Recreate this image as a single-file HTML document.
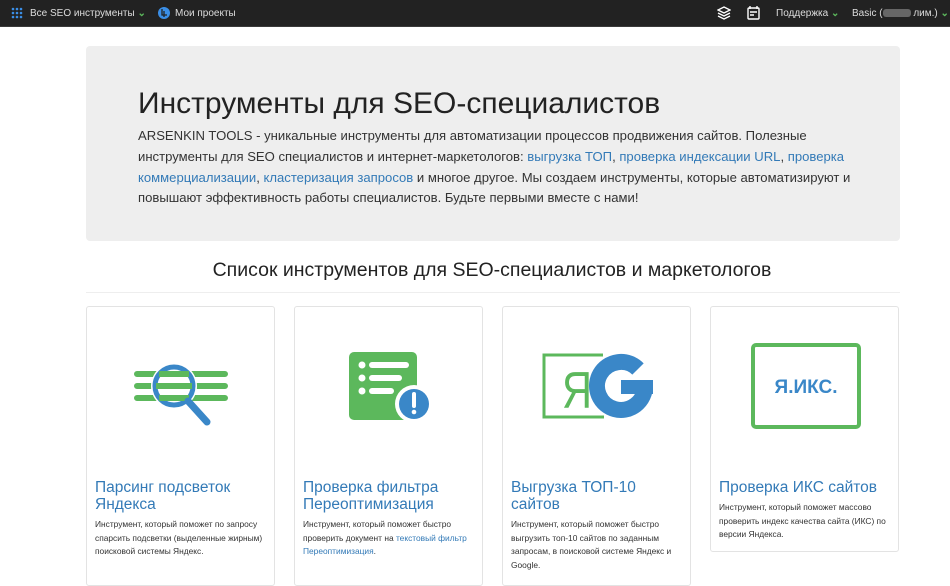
<!DOCTYPE html>
<html><head><meta charset="utf-8"><style>
*{box-sizing:border-box;margin:0;padding:0}
body{width:950px;height:572px;overflow:hidden;background:#fff;font-family:"Liberation Sans",sans-serif;color:#333;position:relative}
.nav{position:absolute;left:0;top:0;width:950px;height:27px;background:#222;border-bottom:1px solid #3a3a3a;color:#ddd;font-size:10px}
.nav span{position:absolute;top:8px}
.g{color:#5cb85c}
.jum{position:absolute;left:86px;top:46px;width:814px;height:195px;background:#eee;border-radius:4px}
.jum h1{position:absolute;left:52px;top:41px;font-size:30px;font-weight:normal;color:#222;white-space:nowrap}
.jum p{position:absolute;left:52px;top:80px;width:720px;font-size:13.1px;line-height:20.8px;color:#333}
a{color:#337ab7;text-decoration:none}
h2{position:absolute;left:0;width:984px;top:259px;text-align:center;font-size:19.5px;font-weight:normal;color:#222}
.hr{position:absolute;left:86px;top:292px;width:814px;border-top:1px solid #eee}
.card{position:absolute;top:306px;width:189px;height:280px;border:1px solid #e3e3e3;border-radius:3px;background:#fff}
.card h3{position:absolute;left:8px;top:172px;font-size:15.5px;font-weight:normal;color:#337ab7;line-height:17px;width:175px}
.card p{position:absolute;left:8px;font-size:8.4px;line-height:13.5px;color:#333;width:178px}
.card svg{position:absolute;left:0;top:0}
</style></head><body>
<div class="nav">
<svg style="position:absolute;left:11px;top:7px" width="12" height="12"><g fill="#3a8ee6"><circle cx="2" cy="2" r="1.3"/><circle cx="6" cy="2" r="1.3"/><circle cx="10" cy="2" r="1.3"/><circle cx="2" cy="6" r="1.3"/><circle cx="6" cy="6" r="1.3"/><circle cx="10" cy="6" r="1.3"/><circle cx="2" cy="10" r="1.3"/><circle cx="6" cy="10" r="1.3"/><circle cx="10" cy="10" r="1.3"/></g></svg>
<span style="left:30px">Все SEO инструменты <b class="g">⌄</b></span>
<svg style="position:absolute;left:157px;top:6px" width="14" height="14"><circle cx="7" cy="7" r="6" fill="#3a8ee6"/><path d="M5 3v6h5M7 5v6" stroke="#222" stroke-width="1.3" fill="none"/></svg>
<span style="left:175px">Мои проекты</span>
<svg style="position:absolute;left:717px;top:6px" width="14" height="14"><path d="M7 1l6 3-6 3-6-3zM1 7l6 3 6-3M1 10l6 3 6-3" stroke="#fff" stroke-width="1.3" fill="none"/></svg>
<svg style="position:absolute;left:747px;top:5px" width="13" height="15"><rect x="1" y="3" width="11" height="11" rx="1" stroke="#fff" stroke-width="1.4" fill="none"/><path d="M3 1v3M10 1v3M3 7h7M3 10h4" stroke="#fff" stroke-width="1.4"/></svg>
<span style="left:776px">Поддержка <b class="g">⌄</b></span>
<span style="left:852px">Basic (<i style="display:inline-block;width:28px;height:8px;background:#666;border-radius:3px;vertical-align:-1px"></i> лим.) <b class="g">⌄</b></span>
</div>
<div class="jum"><h1>Инструменты для SEO-специалистов</h1>
<p>ARSENKIN TOOLS - уникальные инструменты для автоматизации процессов продвижения сайтов. Полезные инструменты для SEO специалистов и интернет-маркетологов: <a>выгрузка ТОП</a>, <a>проверка индексации URL</a>, <a>проверка коммерциализации</a>, <a>кластеризация запросов</a> и многое другое. Мы создаем инструменты, которые автоматизируют и повышают эффективность работы специалистов. Будьте первыми вместе с нами!</p></div>
<h2>Список инструментов для SEO-специалистов и маркетологов</h2>
<div class="hr"></div>

<div class="card" style="left:86px">
<svg width="189" height="160"><g stroke="#5cb85c" stroke-width="6" stroke-linecap="round"><path d="M50 67h88M50 79h88M50 91h88"/></g><circle cx="87" cy="79" r="23" fill="#fff"/><circle cx="87" cy="79" r="19" fill="#fff" stroke="#3a87c8" stroke-width="5"/><g stroke="#5cb85c" stroke-width="6"><path d="M72 67h30M69 79h36M72 91h30"/></g><path d="M101 94l19 21" stroke="#3a87c8" stroke-width="7" stroke-linecap="round"/></svg>
<h3>Парсинг подсветок Яндекса</h3>
<p style="top:211px">Инструмент, который поможет по запросу спарсить подсветки (выделенные жирным) поисковой системы Яндекс.</p></div>

<div class="card" style="left:294px">
<svg width="189" height="160"><rect x="54" y="45" width="68" height="68" rx="5" fill="#5cb85c"/><g fill="#fff"><circle cx="67" cy="58" r="3.5"/><circle cx="67" cy="71" r="3.5"/><circle cx="67" cy="84" r="3.5"/><rect x="74" y="55" width="40" height="6" rx="3"/><rect x="74" y="68" width="33" height="6" rx="3"/><rect x="74" y="81" width="25" height="6" rx="3"/></g><circle cx="119" cy="97" r="19" fill="#fff"/><circle cx="119" cy="97" r="15" fill="#3a87c8"/><path d="M119 87v12" stroke="#fff" stroke-width="4" stroke-linecap="round"/><circle cx="119" cy="105" r="2.3" fill="#fff"/></svg>
<h3>Проверка фильтра Переоптимизация</h3>
<p style="top:211px">Инструмент, который поможет быстро проверить документ на <a>текстовый фильтр Переоптимизация</a>.</p></div>

<div class="card" style="left:502px">
<svg width="189" height="160"><path d="M100 48H41v62h60" stroke="#5cb85c" stroke-width="3" fill="none"/><text x="59" y="101" font-size="52" fill="#5cb85c" font-family="Liberation Sans" transform="translate(59 0) scale(0.8 1) translate(-59 0)">Я</text><path d="M135 62A24 24 0 1 0 142 79" stroke="#3a87c8" stroke-width="16" fill="none"/><rect x="118" y="73" width="32" height="14" fill="#3a87c8"/></svg>
<h3>Выгрузка ТОП-10 сайтов</h3>
<p style="top:211px">Инструмент, который поможет быстро выгрузить топ-10 сайтов по заданным запросам, в поисковой системе Яндекс и Google.</p></div>

<div class="card" style="left:710px;height:246px">
<svg width="189" height="160"><rect x="42" y="38" width="106" height="82" rx="3" stroke="#5cb85c" stroke-width="4" fill="none"/><text x="95" y="86" text-anchor="middle" font-size="19" font-weight="bold" fill="#3a87c8" font-family="Liberation Sans">Я.ИКС.</text></svg>
<h3 style="width:180px">Проверка ИКС сайтов</h3>
<p style="top:194px">Инструмент, который поможет массово проверить индекс качества сайта (ИКС) по версии Яндекса.</p></div>
</body></html>
